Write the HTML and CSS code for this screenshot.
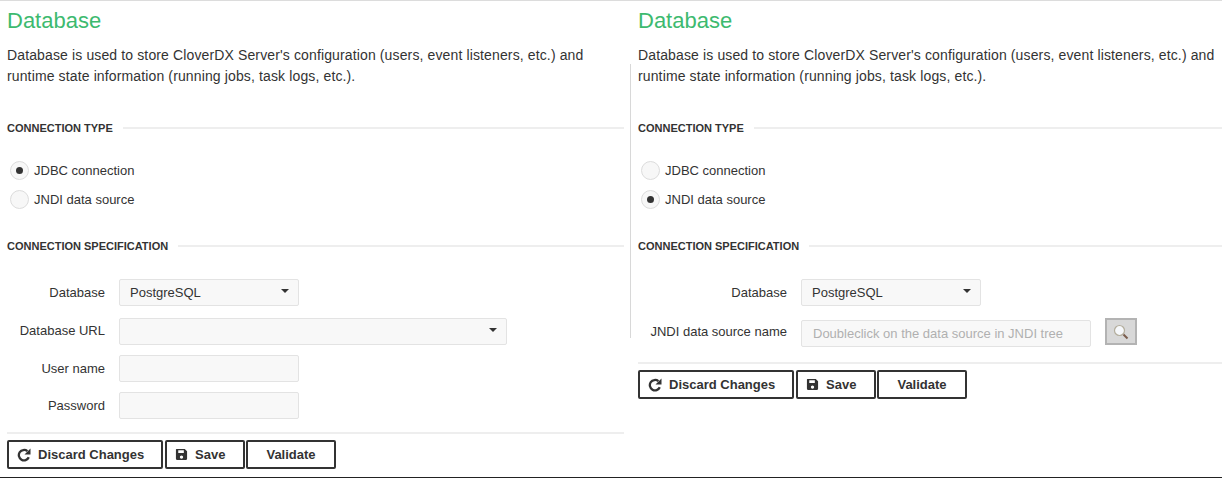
FILE: index.html
```html
<!DOCTYPE html>
<html lang="en">
<head>
<meta charset="utf-8">
<title>Database</title>
<link rel="stylesheet" href="styles.css">
</head>
<body>
<div class="page">
  <section class="panel panel-left">
    <h1 class="title">Database</h1>
    <p class="intro">Database is used to store CloverDX Server's configuration (users, event listeners, etc.) and<br>runtime state information (running jobs, task logs, etc.).</p>
    <div class="section-head first"><span>CONNECTION TYPE</span></div>
    <div class="radios">
      <div class="radio-row"><span class="radio checked"></span>JDBC connection</div>
      <div class="radio-row"><span class="radio"></span>JNDI data source</div>
    </div>
    <div class="section-head second"><span>CONNECTION SPECIFICATION</span></div>
    <div class="form form-left">
      <label class="lbl">Database</label>
      <div class="select"><span>PostgreSQL</span><i class="caret"></i></div>
      <label class="lbl">Database URL</label>
      <div class="select wide"><span></span><i class="caret"></i></div>
      <label class="lbl">User name</label>
      <div class="input"></div>
      <label class="lbl">Password</label>
      <div class="input"></div>
    </div>
    <div class="actions">
      <button class="btn btn-discard"><svg class="ico ico-redo" viewBox="0 0 14 14"><path d="M11.8 9.300A5.200 5.200 0 1 1 10.400 3.200" fill="none" stroke="#333" stroke-width="2.300"/><path d="M13.500 .5v6H7.500z" fill="#333"/></svg>Discard Changes</button>
      <button class="btn btn-save"><svg class="ico ico-save" viewBox="0 0 14 14"><path fill-rule="evenodd" d="M1.5 1H10.5L13 3.5V11.5A1.5 1.5 0 0 1 11.5 13H2.5A1.5 1.5 0 0 1 1 11.5V1.5ZM3.5 2.5V5.500H9.500V2.500ZM7 8A1.800 1.800 0 1 0 7 11.600A1.800 1.800 0 1 0 7 8Z" fill="#333"/></svg>Save</button>
      <button class="btn btn-validate">Validate</button>
    </div>
  </section>
  <section class="panel panel-right">
    <h1 class="title">Database</h1>
    <p class="intro">Database is used to store CloverDX Server's configuration (users, event listeners, etc.) and<br>runtime state information (running jobs, task logs, etc.).</p>
    <div class="section-head first"><span>CONNECTION TYPE</span></div>
    <div class="radios">
      <div class="radio-row"><span class="radio"></span>JDBC connection</div>
      <div class="radio-row"><span class="radio checked"></span>JNDI data source</div>
    </div>
    <div class="section-head second"><span>CONNECTION SPECIFICATION</span></div>
    <div class="form form-right">
      <label class="lbl">Database</label>
      <div class="select"><span>PostgreSQL</span><i class="caret"></i></div>
      <label class="lbl lbl-jndi">JNDI data source name</label>
      <div class="jndi">
        <div class="input placeholder">Doubleclick on the data source in JNDI tree</div>
        <button class="search" aria-label="Search"><svg viewBox="0 0 18 18" width="18" height="18"><circle cx="7.500" cy="7.500" r="5" fill="#f6f8fb" stroke="#b3ad9c" stroke-width="1.200"/><path d="M11.500 11.500L15.500 15.500" stroke="#7a5c4c" stroke-width="2"/></svg></button>
      </div>
    </div>
    <div class="actions">
      <button class="btn btn-discard"><svg class="ico ico-redo" viewBox="0 0 14 14"><path d="M11.8 9.300A5.200 5.200 0 1 1 10.400 3.200" fill="none" stroke="#333" stroke-width="2.300"/><path d="M13.500 .5v6H7.500z" fill="#333"/></svg>Discard Changes</button>
      <button class="btn btn-save"><svg class="ico ico-save" viewBox="0 0 14 14"><path fill-rule="evenodd" d="M1.5 1H10.5L13 3.5V11.5A1.5 1.5 0 0 1 11.5 13H2.5A1.5 1.5 0 0 1 1 11.5V1.5ZM3.5 2.5V5.500H9.500V2.500ZM7 8A1.800 1.800 0 1 0 7 11.600A1.800 1.800 0 1 0 7 8Z" fill="#333"/></svg>Save</button>
      <button class="btn btn-validate">Validate</button>
    </div>
  </section>
  <div class="vdivider"></div>
</div>
</body>
</html>
```
FILE: styles.css
```css
* { box-sizing: border-box; }
html, body { margin: 0; padding: 0; background: #fff; }
body { font-family: "Liberation Sans", Arial, sans-serif; color: #333; overflow: hidden; }
.page {
  position: relative;
  width: 1222px;
  height: 478px;
  display: grid;
  grid-template-columns: 631px 591px;
  border-top: 1px solid #dcdcdc;
  border-bottom: 1px solid #222;
}
.panel { padding-left: 7px; min-width: 0; }
.panel-left { padding-right: 7px; }
.title { margin: 8px 0 0; font-size: 22px; line-height: 24px; font-weight: 400; color: #3dba6f; }
.intro { margin: 12px 0 0; font-size: 14px; line-height: 21px; letter-spacing: 0.130px; color: #333; }
.section-head {
  display: flex;
  align-items: center;
  gap: 10px;
  font-size: 11px;
  font-weight: 700;
  color: #333;
  line-height: 14px;
}
.section-head::after { content: ""; flex: 1; height: 2px; background: #eee; }
.section-head.first { margin-top: 34px; }
.section-head.second { margin-top: 30px; }
.radios { margin-top: 26px; padding-left: 3px; display: flex; flex-direction: column; gap: 10px; }
.radio-row { display: flex; align-items: center; gap: 5px; font-size: 13px; height: 19px; }
.radio {
  width: 19px; height: 19px;
  border: 1px solid #dcdcdc;
  border-radius: 50%;
  background: #f7f7f7;
  display: flex; align-items: center; justify-content: center;
}
.radio.checked::after { content: ""; width: 7px; height: 7px; border-radius: 50%; background: #333; }
.form { display: grid; align-items: center; margin-top: 26px; }
.form-left { grid-template-columns: 98px auto; column-gap: 14px; row-gap: 10px; justify-content: start; }
.form-right { grid-template-columns: 149px auto; column-gap: 14px; row-gap: 12px; justify-content: start; padding-bottom: 2px; }
.lbl { font-size: 13px; text-align: right; white-space: nowrap; color: #333; }
.lbl-jndi { margin-bottom: 2px; }
.select, .input {
  height: 27px;
  width: 180px;
  background: #f8f8f8;
  border: 1px solid #e3e3e3;
  border-radius: 2px;
  font-size: 13px;
}
.select { display: flex; align-items: center; justify-content: space-between; padding: 0 9px 0 10px; }
.select.wide { width: 388px; margin-top: 2px; }
.caret { border: 4px solid transparent; border-top: 4px solid #333; border-bottom: 0; margin-top: -3px; }
.placeholder { width: 290px; color: #b0b0b0; display: flex; align-items: center; padding-left: 11px; margin-top: 2px; }
.jndi { display: flex; align-items: flex-start; gap: 14px; }
.search {
  width: 32px; height: 27px;
  padding: 0;
  background: #d8d8d8;
  border: 2px solid #b3b3b3;
  display: flex; align-items: center; justify-content: center;
}
.actions {
  margin-top: 13px;
  padding-top: 6px;
  border-top: 2px solid #eee;
  display: flex;
  gap: 2px;
}
.btn {
  height: 29px;
  background: #fff;
  border: 2px solid #333;
  border-radius: 2px;
  font-family: inherit;
  font-size: 13px;
  font-weight: 700;
  color: #333;
  display: flex;
  align-items: center;
  padding: 0 0 0 8px;
}
.btn-discard { width: 156px; }
.btn-save { width: 80px; }
.btn-validate { width: 90px; padding: 0; justify-content: center; margin-left: -1px; }
.ico { flex: none; }
.ico-redo { width: 14px; height: 14px; margin-right: 7px; }
.ico-save { width: 13px; height: 13px; margin-right: 7px; }
.vdivider { position: absolute; left: 630px; top: 63px; width: 1px; height: 274px; background: #d8d8d8; }
```
